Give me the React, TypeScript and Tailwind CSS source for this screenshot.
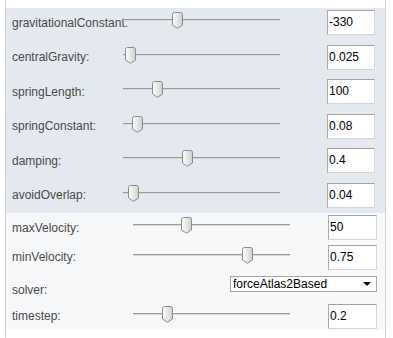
import React from "react";

interface IRow {
  label: string;
  value: string;
  thumb: number;
}

const physicsRows: IRow[] = [
  { label: "gravitationalConstant:", value: "-330", thumb: 49 },
  { label: "centralGravity:", value: "0.025", thumb: 2 },
  { label: "springLength:", value: "100", thumb: 29 },
  { label: "springConstant:", value: "0.08", thumb: 9 },
  { label: "damping:", value: "0.4", thumb: 59 },
  { label: "avoidOverlap:", value: "0.04", thumb: 5 },
];

const Thumb = ({ left }: { left: number }) => (
  <svg
    className="absolute top-[2px]"
    style={{ left }}
    width="11"
    height="17"
    viewBox="0 0 11 17"
  >
    <defs>
      <linearGradient id="thumbGrad" x1="0" y1="0" x2="1" y2="0">
        <stop offset="0%" stopColor="#ffffff" />
        <stop offset="100%" stopColor="#cfcfcf" />
      </linearGradient>
    </defs>
    <path
      d="M2.5 0.5 H8.5 Q10.5 0.5 10.5 2.5 V13 L5.5 16.3 L0.5 13 V2.5 Q0.5 0.5 2.5 0.5 Z"
      fill="url(#thumbGrad)"
      stroke="#8c8c8c"
      strokeWidth="1"
    />
  </svg>
);

const Slider = ({ thumb }: { thumb: number }) => (
  <div className="relative h-[25px] w-[157px] shrink-0">
    <div className="absolute left-0 right-0 top-[9px] h-[2px] border-t border-[#9a9a9a] bg-[#d9d9d9]" />
    <Thumb left={thumb} />
  </div>
);

const ValueBox = ({ value, w }: { value: string; w: string }) => (
  <div
    className={`h-[25px] ${w} shrink-0 bg-white border border-[#d6d6d6] border-t-[#a3a3a3] border-l-[#ababab] pl-[1px] text-[12px] leading-[23px] text-black`}
  >
    {value}
  </div>
);

const App = () => {
  return (
    <div
      className="w-[393px] h-[338px] bg-white overflow-hidden"
      style={{ fontFamily: '"Liberation Sans", Arial, sans-serif' }}
    >
      <div className="ml-[5px] w-[381px] h-[338px] border-x border-[#d2d2d2] pt-[8px]">
        <div className="bg-[#e4e9f0] pt-[2px] pb-[5.5px] flex flex-col gap-[9.5px]">
          {physicsRows.map((row) => (
            <div className="flex items-center h-[25px] pl-[6px]" key={row.label}>
              <div className="w-[111px] shrink-0 whitespace-nowrap text-[12px] text-[#4a4a4a]">
                {row.label}
              </div>
              <Slider thumb={row.thumb} />
              <div className="w-[47px] shrink-0" />
              <ValueBox value={row.value} w="w-[48px]" />
            </div>
          ))}
        </div>
        <div className="bg-[#f7f8fa] pt-[2px] pb-[1.5px] flex flex-col gap-[4.5px]">
          <div className="flex items-center h-[25px] pl-[6px]">
            <div className="w-[121px] shrink-0 text-[12px] text-[#4a4a4a]">maxVelocity:</div>
            <Slider thumb={48} />
            <div className="w-[38px] shrink-0" />
            <ValueBox value="50" w="w-[49px]" />
          </div>
          <div className="flex items-center h-[25px] pl-[6px]">
            <div className="w-[121px] shrink-0 text-[12px] text-[#4a4a4a]">minVelocity:</div>
            <Slider thumb={109} />
            <div className="w-[38px] shrink-0" />
            <ValueBox value="0.75" w="w-[49px]" />
          </div>
          <div className="flex items-start h-[25px] pl-[6px]">
            <div className="w-[218px] shrink-0 pt-[7px] text-[12px] text-[#4a4a4a]">solver:</div>
            <div className="mt-[2px] h-[16px] w-[147px] flex items-center justify-between bg-white border border-[#a6a6a6] pl-[2px] pr-[5px] text-[12px] text-black leading-none">
              <span>forceAtlas2Based</span>
              <span className="w-0 h-0 border-x-[4px] border-x-transparent border-t-[4px] border-t-black" />
            </div>
          </div>
          <div className="flex items-center h-[25px] pl-[6px]">
            <div className="w-[121px] shrink-0 text-[12px] text-[#4a4a4a]">timestep:</div>
            <Slider thumb={29} />
            <div className="w-[38px] shrink-0" />
            <ValueBox value="0.2" w="w-[49px]" />
          </div>
        </div>
      </div>
    </div>
  );
};

export default App;
